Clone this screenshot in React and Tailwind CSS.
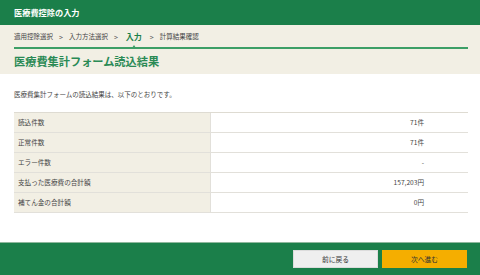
import React from "react";

const rows = [
  ["読込件数", "71件"],
  ["正常件数", "71件"],
  ["エラー件数", "-"],
  ["支払った医療費の合計額", "157,203円"],
  ["補てん金の合計額", "0円"],
];

function Sep() {
  return <span className="text-[7px] text-[#555]">&gt;</span>;
}

function App() {
  return (
    <div
      className="w-[480px] h-[275px] flex flex-col bg-white overflow-hidden"
      style={{ fontFamily: '"Noto Sans CJK JP", "Noto Sans", sans-serif' }}
    >
      <div className="h-[25px] bg-[#1b7f4a] flex items-center px-[14px] text-white text-[8.2px] font-bold">
        医療費控除の入力
      </div>

      <div className="bg-[#f2efe4] pl-[14px] pr-[12px] pt-[5px] h-[49px]">
        <div className="h-[14px] flex items-center gap-[6px] text-[6.5px] text-[#444]">
          <span>適用控除選択</span>
          <Sep />
          <span>入力方法選択</span>
          <Sep />
          <span className="relative text-[8px] font-bold text-[#1b7f4a] mx-[2px]">
            入力
            <span className="absolute left-1/2 -translate-x-1/2 top-[14px] w-0 h-0 border-l-[2.5px] border-r-[2.5px] border-b-[3px] border-l-transparent border-r-transparent border-b-[#3d9f66]" />
          </span>
          <Sep />
          <span>計算結果確認</span>
        </div>
        <div className="mt-[3px] h-[2px] bg-[#3d9f66]" />
        <div className="h-[25px] flex items-center text-[11.2px] font-bold text-[#2a8a55]">
          医療費集計フォーム読込結果
        </div>
      </div>

      <div className="px-[14px] pr-[12px]">
        <p className="pt-[15px] h-[25px] leading-[10px] text-[6.5px] text-[#444]">
          医療費集計フォームの読込結果は、以下のとおりです。
        </p>
        <div className="mt-[13px] border-t border-[#dedbd2]">
          {rows.map(([label, value]) => (
            <div key={label} className="flex h-[20px] border-b border-[#e2e0da] text-[6.6px] text-[#444]">
              <div className="w-[197px] bg-[#f2efe4] flex items-center pl-[4px] border-r border-[#e2e0da]">
                {label}
              </div>
              <div className="flex-1 flex items-center justify-end pr-[44px]">{value}</div>
            </div>
          ))}
        </div>
      </div>

      <div className="flex-1" />

      <div className="h-[33px] bg-[#1b7f4a] border-t border-[#8fb89d] flex justify-end items-start gap-[4px] pt-[7px] pr-[13px]">
        <button className="w-[85px] h-[18px] bg-[#efefef] border border-[#dcdcdc] text-[6.8px] text-[#333]">
          前に戻る
        </button>
        <button className="w-[85px] h-[18px] bg-[#f5ae00] text-[6.8px] text-[#333]">
          次へ進む
        </button>
      </div>
    </div>
  );
}

export default App;
